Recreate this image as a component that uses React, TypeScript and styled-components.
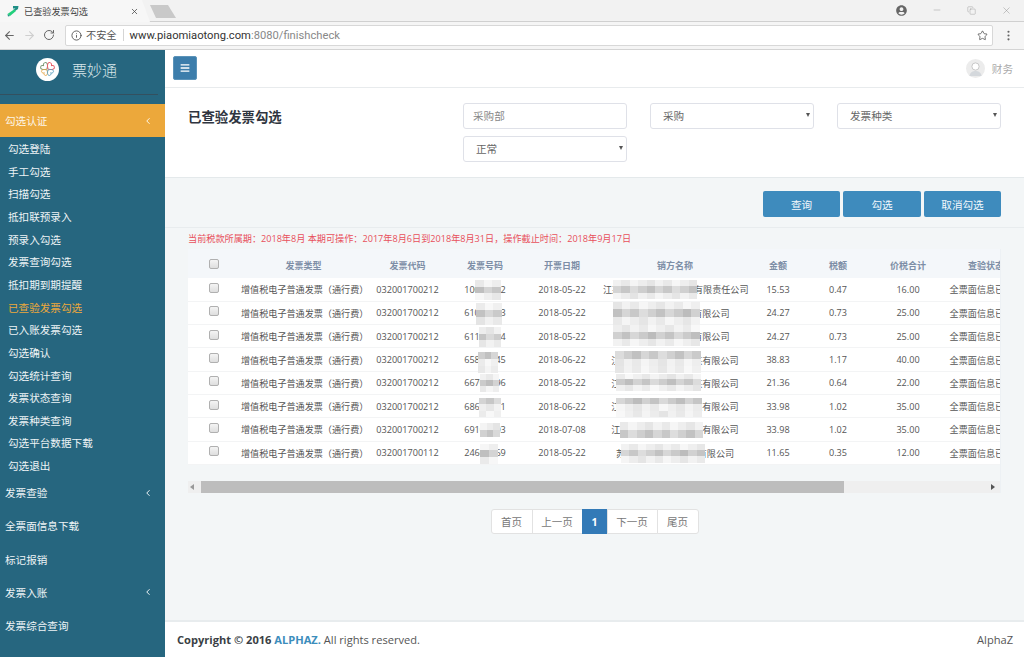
import styled, { createGlobalStyle } from "styled-components";
import { ArrowLeft, ArrowRight, ChevronLeft, Copy, EllipsisVertical, Info, Minus, RotateCw, Star, X } from "lucide-react";
import { FaBars, FaUserCircle } from "react-icons/fa";

const FONT = `"Open Sans", "Noto Sans CJK SC", sans-serif`;

const GlobalStyle = createGlobalStyle`
    html, body { margin: 0; height: 100%; overflow: hidden; }
    body { font-family: ${FONT}; color: #555; background: #fff; }
    * { box-sizing: border-box; }
`;

// Browser frame
const Page = styled.div`
    width: 100%;
    height: 100vh;
    display: flex;
    flex-direction: column;
`;

const TabStrip = styled.div`
    height: 22px;
    display: flex;
    align-items: flex-start;
    background: #f2f2f2;
    border-bottom: 1px solid #d0d0d0;
`;

const Tab = styled.div`
    width: 150px;
    height: 22px;
    padding: 0 11px 0 7px;
    display: flex;
    align-items: center;
    gap: 5px;
    font-size: 9.15px;
    color: #444;
    background: #f7f7f7;
    clip-path: polygon(0 100%, 0 0, 142px 0, 150px 100%);
    svg { flex-shrink: 0; }
`;

const TabTitle = styled.span`
    flex: 1;
`;

const NewTab = styled.div`
    width: 26px;
    height: 13px;
    margin: 5px 0 0 0;
    background: #c9c9c9;
    clip-path: polygon(0 0, 18px 0, 26px 100%, 6px 100%);
`;

const WindowControls = styled.div`
    margin-left: auto;
    height: 20px;
    display: flex;
    align-items: center;
    color: #8a8a8a;
`;

const WindowButton = styled.span`
    width: 35px;
    display: flex;
    justify-content: center;
`;

const Profile = styled.span`
    display: flex;
    color: #666;
    margin-right: 12px;
`;

const Toolbar = styled.div`
    height: 28px;
    padding: 2px 0 3px 0;
    display: flex;
    align-items: center;
    background: #f5f5f5;
    border-bottom: 1px solid #d4d4d4;
`;

const NavButtons = styled.div`
    width: 65px;
    padding-left: 3px;
    display: flex;
    align-items: center;
    gap: 7px;
`;

const NavButton = styled.span<{ $off?: boolean }>`
    display: flex;
    color: ${(p) => (p.$off ? "#cfcfcf" : "#666")};
`;

const AddressBar = styled.div`
    width: 928px;
    height: 21px;
    padding: 0 4px 0 5px;
    display: flex;
    align-items: center;
    background: #fff;
    border: 1px solid #d8d8d8;
    border-radius: 2px;
    color: #555;
`;

const Insecure = styled.span`
    margin-left: 4px;
    padding-right: 6px;
    border-right: 1px solid #d5d5d5;
    font-size: 10.2px;
    line-height: 12px;
    color: #555;
`;

const Url = styled.span`
    flex: 1;
    margin-left: 6px;
    font-family: Roboto, sans-serif;
    font-size: 11.2px;
    color: #888;
    b { font-weight: 400; color: #333; }
`;

const MenuDots = styled.span`
    width: 31px;
    display: flex;
    justify-content: center;
    color: #666;
`;

// Page body
const Body = styled.div`
    flex: 1;
    min-height: 0;
    display: flex;
`;

const Sidebar = styled.aside`
    width: 165px;
    flex-shrink: 0;
    background: #26667f;
    color: #eef4f6;
    overflow: hidden;
`;

const Brand = styled.div`
    height: 45px;
    margin: 0 7px 9px 0;
    padding: 0 0 6px 36px;
    display: flex;
    align-items: center;
    gap: 13px;
    border-bottom: 1px solid #33505f;
`;

const BrandName = styled.span`
    font-size: 15px;
    font-weight: 300;
    color: #d8e6ea;
`;

const MenuHead = styled.div<{ $active?: boolean }>`
    height: 33.3px;
    padding: 0 12px 0 5px;
    display: flex;
    align-items: center;
    justify-content: space-between;
    font-size: 10.6px;
    background: ${(p) => (p.$active ? "#eca83b" : "transparent")};
    color: ${(p) => (p.$active ? "#fdf6e8" : "#eef4f6")};
`;

const SubMenu = styled.div`
    margin-bottom: -1px;
`;

const SubItem = styled.div<{ $current?: boolean }>`
    height: 22.65px;
    padding-left: 8px;
    display: flex;
    align-items: center;
    font-size: 10.6px;
    color: ${(p) => (p.$current ? "#eca83b" : "#eef4f6")};
`;

const Main = styled.main`
    flex: 1;
    min-width: 0;
    display: flex;
    flex-direction: column;
    background: #f3f6f7;
`;

const TopBar = styled.header`
    height: 38px;
    padding: 0 11px 0 8px;
    display: flex;
    align-items: center;
    justify-content: space-between;
    background: #fff;
    border-bottom: 1px solid #e8ebed;
`;

const Toggle = styled.button`
    width: 24px;
    height: 24px;
    margin-top: -1px;
    padding: 0;
    display: flex;
    align-items: center;
    justify-content: center;
    color: #fff;
    background: #3c7dab;
    border: 1px solid #5b93b9;
    border-radius: 2px;
`;

const UserBox = styled.div`
    margin-top: -1px;
    display: flex;
    align-items: center;
    gap: 7px;
    font-size: 10.6px;
    color: #aaa;
`;

const FilterBar = styled.section`
    height: 90px;
    padding: 15px 23px 0;
    display: flex;
    justify-content: space-between;
    background: #fff;
    border-bottom: 1px solid #e4e9eb;
`;

const Title = styled.h2`
    margin: 5px 0 0;
    font-size: 13.4px;
    line-height: 18px;
    font-weight: 700;
    color: #2f3540;
`;

const FilterGrid = styled.div`
    display: grid;
    grid-template-columns: repeat(3, 164px);
    grid-auto-rows: 26px;
    gap: 7px 23px;
`;

const TextInput = styled.input`
    width: 100%;
    height: 26px;
    padding: 0 9px;
    font: 10.6px ${FONT};
    color: #666;
    background: #fff;
    border: 1px solid #dfe1e8;
    border-radius: 3px;
    &::placeholder { color: #888; opacity: 1; }
`;

const SelectBox = styled.div`
    position: relative;
    &::after {
        content: "";
        position: absolute;
        right: 4px;
        top: 10px;
        border: 2.5px solid transparent;
        border-top: 4px solid #555;
        border-bottom: 0;
    }
`;

const Select = styled.select`
    width: 100%;
    height: 26px;
    padding: 0 12px;
    appearance: none;
    font: 10.6px ${FONT};
    color: #666;
    background: #fff;
    border: 1px solid #dfe1e8;
    border-radius: 3px;
`;

const ActionBar = styled.section`
    height: 50px;
    padding: 13px 23px 0;
    display: flex;
    justify-content: flex-end;
    gap: 3px;
    border-bottom: 1px solid #e8ecee;
`;

const ActionButton = styled.button<{ $wide?: boolean }>`
    width: ${(p) => (p.$wide ? 78 : 77)}px;
    height: 26px;
    padding: 0;
    font: 10.6px ${FONT};
    color: #f4f9fc;
    background: #3e8bbd;
    border: 0;
    border-radius: 2px;
`;

const Notice = styled.p`
    margin: 0;
    padding: 0 23px 1px;
    height: 21px;
    display: flex;
    align-items: center;
    font-size: 9.15px;
    color: #e8505b;
`;

const TablePanel = styled.section`
    margin: 0 23px;
    height: 244px;
    display: flex;
    flex-direction: column;
    overflow: hidden;
    border-right: 1px solid #edf1f4;
`;

const TableClip = styled.div`
    height: 232px;
    overflow: hidden;
`;

const InvoiceTable = styled.table`
    width: 835px;
    table-layout: fixed;
    border-collapse: collapse;
    font-size: 9.1px;
    color: #555;
`;

const HeadRow = styled.tr`
    height: 29px;
    background: #f4f7fa;
`;

const HeadCell = styled.th`
    padding: 3px 0 0;
    font-size: 9px;
    font-weight: 600;
    color: #7d8ea6;
    text-align: center;
    white-space: nowrap;
`;

const Row = styled.tr`
    height: 23.3px;
    background: #fff;
    border-bottom: 1px solid #f3f4f5;
`;

const Cell = styled.td`
    position: relative;
    padding: 0;
    text-align: center;
    white-space: nowrap;
`;

const Check = styled.input`
    appearance: none;
    display: block;
    width: 10px;
    height: 10px;
    margin: -3px 0 0 21px;
    background: linear-gradient(#f4f4f4, #dedede);
    border: 1px solid #b0b0b0;
    border-radius: 2px;
`;

const MosaicBox = styled.div<{ $x: number; $y: number; $w: number; $h: number; $cols: number }>`
    position: absolute;
    left: ${(p) => p.$x}px;
    top: ${(p) => p.$y}px;
    width: ${(p) => p.$w}px;
    height: ${(p) => p.$h}px;
    display: grid;
    grid-template-columns: repeat(${(p) => p.$cols}, 1fr);
    grid-auto-rows: 1fr;
    filter: blur(0.7px);
`;

const Scrollbar = styled.div`
    height: 12px;
    padding: 0 5px 0 2px;
    display: flex;
    align-items: center;
    background: #efefef;
`;

const ScrollArrow = styled.span<{ $right?: boolean }>`
    width: 0;
    height: 0;
    border: 3px solid transparent;
    ${(p) => (p.$right
        ? "border-left: 4px solid #555; border-right: 0; margin-left: auto;"
        : "border-right: 4px solid #999; border-left: 0;")}
`;

const ScrollThumb = styled.span`
    width: 643px;
    height: 12px;
    margin-left: 7px;
    background: #bdbdbd;
`;

const Pager = styled.nav`
    margin: 16px 0 0 1px;
    align-self: center;
    display: flex;
`;

const PageLink = styled.a<{ $w: number; $active?: boolean }>`
    width: ${(p) => p.$w}px;
    height: 25px;
    margin-left: -1px;
    display: flex;
    align-items: center;
    justify-content: center;
    font-size: 10.5px;
    font-weight: ${(p) => (p.$active ? 700 : 400)};
    color: ${(p) => (p.$active ? "#fff" : "#777")};
    background: ${(p) => (p.$active ? "#337ab7" : "#fff")};
    border: 1px solid ${(p) => (p.$active ? "#337ab7" : "#e2e2e2")};
    &:first-child { border-radius: 3px 0 0 3px; }
    &:last-child { border-radius: 0 3px 3px 0; }
`;

const Footer = styled.footer`
    margin-top: auto;
    height: 37px;
    padding: 0 11px 0 12px;
    display: flex;
    align-items: center;
    justify-content: space-between;
    font-size: 11.1px;
    background: #fff;
    border-top: 2px solid #e8ecee;
    color: #555;
    b { color: #3a3f45; }
    a { color: #3c8dbc; font-weight: 700; }
`;

const FooterBrand = styled.span`
    color: #555;
`;

function FavIcon() {
    return (
        <svg width="12" height="12" viewBox="0 0 12 12">
            <path d="M6 1 H11.500 L11 4 L8 6 L6 5 L8.500 3.500 H6 Z" fill="#1f8f86" />
            <path d="M0.500 9 L7 4.500 L9 6 L3 11 Z" fill="#22d07c" />
            <path d="M0.500 9 L3 11 L1 11.500 Z" fill="#1f8f86" />
        </svg>
    );
}

const HEART = "M0 0 C-4 -2 -5 -5 -3 -6 C-1.500 -6.800 0 -5.500 0 -4.500 C0 -5.500 1.500 -6.800 3 -6 C5 -5 4 -2 0 0 Z";

function Logo() {
    return (
        <svg width="23" height="23" viewBox="0 0 23 23">
            <circle cx="11.500" cy="11.500" r="11.500" fill="#fff" />
            <g fill="none" strokeWidth="1">
                <path d={HEART} stroke="#7c9a78" transform="translate(11 11) rotate(-45)" />
                <path d={HEART} stroke="#e8606a" transform="translate(12 11) rotate(45)" />
                <path d={HEART} stroke="#e5a74a" transform="translate(11 12) rotate(-135) scale(0.85)" />
                <path d={HEART} stroke="#5aa0c0" transform="translate(12 12) rotate(135) scale(0.85)" />
            </g>
        </svg>
    );
}

function Avatar() {
    return (
        <svg width="19" height="19" viewBox="0 0 19 19">
            <circle cx="9.500" cy="9.500" r="9.500" fill="#ececec" />
            <circle cx="9.500" cy="7.500" r="3.600" fill="#fff" stroke="#bdbdbd" strokeWidth="0.8" />
            <path d="M3.500 17 C4 13 7 12 9.500 12 C12 12 15 13 15.500 17 Z" fill="#d4d8dc" />
        </svg>
    );
}

// 打码区域: 色块由 seed 算出来, 每次渲染都一样
function Mosaic({ x, y, w, h, band, seed }: { x: number; y: number; w: number; h: number; band: number; seed: number }) {
    const cols = Math.ceil(w / 9);
    const rows = Math.ceil(h / 8);
    const cells = Array.from({ length: cols * rows }, (_, i) => {
        const noise = ((i + seed) * 37 + seed * 11) % 23;
        const row = Math.floor(i / cols);
        const grey = row === band ? 188 + noise * 1.5 : 228 + noise * 0.9;
        return Math.round(grey);
    });
    return (
        <MosaicBox $x={x} $y={y} $w={w} $h={h} $cols={cols}>
            {cells.map((grey, i) => (
                <span key={i} style={{ background: `rgb(${grey},${grey},${grey})` }} />
            ))}
        </MosaicBox>
    );
}

const menuTop = ["勾选登陆", "手工勾选", "扫描勾选", "抵扣联预录入", "预录入勾选", "发票查询勾选", "抵扣期到期提醒", "已查验发票勾选", "已入账发票勾选", "勾选确认", "勾选统计查询", "发票状态查询", "发票种类查询", "勾选平台数据下载", "勾选退出"];

const menuBottom = [
    { name: "发票查验", more: true },
    { name: "全票面信息下载", more: false },
    { name: "标记报销", more: false },
    { name: "发票入账", more: true },
    { name: "发票综合查询", more: false },
];

const columns = [
    { name: "发票类型", width: 125 },
    { name: "发票代码", width: 83 },
    { name: "发票号码", width: 72 },
    { name: "开票日期", width: 82 },
    { name: "销方名称", width: 144 },
    { name: "金额", width: 62 },
    { name: "税额", width: 58 },
    { name: "价税合计", width: 82 },
    { name: "查验状态", width: 74 },
];

const rows = [
    { code: "032001700212", no: "10000002", date: "2018-05-22", seller: "江某某某某某某某某某有限责任公司", amount: "15.53", tax: "0.47", total: "16.00", noBlur: [26, 2, 26, 20], sellerBlur: [10, 2, 84, 19], band: 1 },
    { code: "032001700212", no: "61000003", date: "2018-05-22", seller: "某某某某某某某某有限公司", amount: "24.27", tax: "0.73", total: "25.00", noBlur: [27, 1, 26, 22], sellerBlur: [10, 0, 87, 23], band: 1 },
    { code: "032001700212", no: "61100094", date: "2018-05-22", seller: "某某某某某某某某有限公司", amount: "24.27", tax: "0.73", total: "25.00", noBlur: [30, 2, 22, 20], sellerBlur: [10, 0, 87, 21], band: 1 },
    { code: "032001700212", no: "65800045", date: "2018-06-22", seller: "江某某某某某某某某某有限公司", amount: "38.83", tax: "1.17", total: "40.00", noBlur: [29, 4, 20, 21], sellerBlur: [12, 3, 86, 22], band: 0 },
    { code: "032001700212", no: "66700096", date: "2018-05-22", seller: "江某某某某某某某某某有限公司", amount: "21.36", tax: "0.64", total: "22.00", noBlur: [31, 2, 19, 18], sellerBlur: [13, 2, 85, 17], band: 1 },
    { code: "032001700212", no: "68600091", date: "2018-06-22", seller: "江某某某某某某某某某有限公司", amount: "33.98", tax: "1.02", total: "35.00", noBlur: [30, 3, 22, 19], sellerBlur: [13, 3, 86, 19], band: 0 },
    { code: "032001700212", no: "69100003", date: "2018-07-08", seller: "江某某某某某某某某某有限公司", amount: "33.98", tax: "1.02", total: "35.00", noBlur: [31, 5, 20, 14], sellerBlur: [17, 4, 83, 16], band: 1 },
    { code: "032001700112", no: "24600069", date: "2018-05-22", seller: "苏某某某某某某某某有限公司", amount: "11.65", tax: "0.35", total: "12.00", noBlur: [31, 2, 18, 20], sellerBlur: [18, 2, 84, 19], band: 1 },
];

const pages = [
    { label: "首页", width: 42 },
    { label: "上一页", width: 51 },
    { label: "1", width: 26, active: true },
    { label: "下一页", width: 51 },
    { label: "尾页", width: 42 },
];

function App() {
    return (
        <Page>
            <GlobalStyle />
            <TabStrip>
                <Tab>
                    <FavIcon />
                    <TabTitle>已查验发票勾选</TabTitle>
                    <X size={9} strokeWidth={2} />
                </Tab>
                <NewTab />
                <WindowControls>
                    <Profile><FaUserCircle size={11} /></Profile>
                    <WindowButton><Minus size={10} strokeWidth={1} /></WindowButton>
                    <WindowButton><Copy size={9} strokeWidth={1} /></WindowButton>
                    <WindowButton><X size={11} strokeWidth={1} /></WindowButton>
                </WindowControls>
            </TabStrip>
            <Toolbar>
                <NavButtons>
                    <NavButton><ArrowLeft size={13} /></NavButton>
                    <NavButton $off><ArrowRight size={13} /></NavButton>
                    <NavButton><RotateCw size={12} /></NavButton>
                </NavButtons>
                <AddressBar>
                    <Info size={11} />
                    <Insecure>不安全</Insecure>
                    <Url><b>www.piaomiaotong.com</b>:8080/finishcheck</Url>
                    <Star size={11} color="#444" strokeWidth={1.6} />
                </AddressBar>
                <MenuDots><EllipsisVertical size={13} /></MenuDots>
            </Toolbar>
            <Body>
                <Sidebar>
                    <Brand>
                        <Logo />
                        <BrandName>票妙通</BrandName>
                    </Brand>
                    <MenuHead $active>
                        勾选认证
                        <ChevronLeft size={10} strokeWidth={2.4} />
                    </MenuHead>
                    <SubMenu>
                        {menuTop.map((name) => (
                            <SubItem key={name} $current={name === "已查验发票勾选"}>{name}</SubItem>
                        ))}
                    </SubMenu>
                    {menuBottom.map((item) => (
                        <MenuHead key={item.name}>
                            {item.name}
                            {item.more && <ChevronLeft size={10} strokeWidth={2.4} />}
                        </MenuHead>
                    ))}
                </Sidebar>
                <Main>
                    <TopBar>
                        <Toggle><FaBars size={10} /></Toggle>
                        <UserBox><Avatar />财务</UserBox>
                    </TopBar>
                    <FilterBar>
                        <Title>已查验发票勾选</Title>
                        <FilterGrid>
                            <TextInput placeholder="采购部" />
                            <SelectBox><Select defaultValue="采购"><option>采购</option></Select></SelectBox>
                            <SelectBox><Select defaultValue="发票种类"><option>发票种类</option></Select></SelectBox>
                            <SelectBox><Select defaultValue="正常"><option>正常</option></Select></SelectBox>
                        </FilterGrid>
                    </FilterBar>
                    <ActionBar>
                        <ActionButton>查询</ActionButton>
                        <ActionButton $wide>勾选</ActionButton>
                        <ActionButton>取消勾选</ActionButton>
                    </ActionBar>
                    <Notice>当前税款所属期：2018年8月 本期可操作：2017年8月6日到2018年8月31日，操作截止时间：2018年9月17日</Notice>
                    <TablePanel>
                        <TableClip>
                            <InvoiceTable>
                                <colgroup>
                                    <col width={53} />
                                    {columns.map((c) => <col key={c.name} width={c.width} />)}
                                </colgroup>
                                <thead>
                                    <HeadRow>
                                        <HeadCell><Check type="checkbox" /></HeadCell>
                                        {columns.map((c) => <HeadCell key={c.name}>{c.name}</HeadCell>)}
                                    </HeadRow>
                                </thead>
                                <tbody>
                                    {rows.map((row, i) => (
                                        <Row key={i}>
                                            <Cell><Check type="checkbox" /></Cell>
                                            <Cell>增值税电子普通发票（通行费）</Cell>
                                            <Cell>{row.code}</Cell>
                                            <Cell>
                                                {row.no}
                                                <Mosaic x={row.noBlur[0]} y={row.noBlur[1]} w={row.noBlur[2]} h={row.noBlur[3]} band={row.band} seed={i + 3} />
                                            </Cell>
                                            <Cell>{row.date}</Cell>
                                            <Cell>
                                                {row.seller}
                                                <Mosaic x={row.sellerBlur[0]} y={row.sellerBlur[1]} w={row.sellerBlur[2]} h={row.sellerBlur[3]} band={row.band} seed={i * 5 + 7} />
                                            </Cell>
                                            <Cell>{row.amount}</Cell>
                                            <Cell>{row.tax}</Cell>
                                            <Cell>{row.total}</Cell>
                                            <Cell>全票面信息已查验</Cell>
                                        </Row>
                                    ))}
                                </tbody>
                            </InvoiceTable>
                        </TableClip>
                        <Scrollbar>
                            <ScrollArrow />
                            <ScrollThumb />
                            <ScrollArrow $right />
                        </Scrollbar>
                    </TablePanel>
                    <Pager>
                        {pages.map((p) => (
                            <PageLink key={p.label} $w={p.width} $active={p.active}>{p.label}</PageLink>
                        ))}
                    </Pager>
                    <Footer>
                        <span><b>Copyright © 2016 <a>ALPHAZ.</a></b> All rights reserved.</span>
                        <FooterBrand>AlphaZ</FooterBrand>
                    </Footer>
                </Main>
            </Body>
        </Page>
    );
}

export default App;
